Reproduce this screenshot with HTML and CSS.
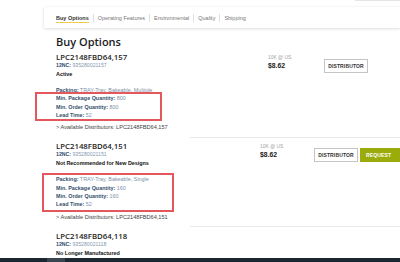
FILE: index.html
```html
<!DOCTYPE html>
<html lang="en">
<head>
  <meta charset="UTF-8" />
  <title>Buy Options</title>
  <link rel="stylesheet" href="styles.css">
</head>
<body>
  <div class="topline"></div>
  <nav class="tabs">
    <a class="tab active"><span>Buy Options</span></a>
    <a class="tab">Operating Features</a>
    <a class="tab">Environmental</a>
    <a class="tab">Quality</a>
    <a class="tab">Shipping</a>
  </nav>

  <main class="content">
    <h1>Buy Options</h1>

    <div class="item">
      <div class="info">
        <div class="part">LPC2148FBD64,157</div>
        <div class="nc"><b>12NC:</b> 935280021157</div>
        <div class="status">Active</div>
        <div class="specs">
          <div><b>Packing:</b> TRAY-Tray, Bakeable, Multiple</div>
          <div><b>Min. Package Quantity:</b> 800</div>
          <div><b>Min. Order Quantity:</b> 800</div>
          <div><b>Lead Time:</b> 52</div>
        </div>
        <div class="dist">&gt; Available Distributors: LPC2148FBD64,157</div>
        <div class="mark mark-one"></div>
      </div>
      <div class="price">
        <div class="qty">10K @ US</div>
        <div class="amount">$8.62</div>
      </div>
      <div class="actions">
        <button class="btn">DISTRIBUTOR</button>
      </div>
    </div>

    <div class="item">
      <div class="info">
        <div class="part">LPC2148FBD64,151</div>
        <div class="nc"><b>12NC:</b> 935280021151</div>
        <div class="status">Not Recommended for New Designs</div>
        <div class="specs">
          <div><b>Packing:</b> TRAY-Tray, Bakeable, Single</div>
          <div><b>Min. Package Quantity:</b> 160</div>
          <div><b>Min. Order Quantity:</b> 160</div>
          <div><b>Lead Time:</b> 52</div>
        </div>
        <div class="dist">&gt; Available Distributors: LPC2148FBD64,151</div>
        <div class="mark mark-two"></div>
      </div>
      <div class="price">
        <div class="qty">10K @ US</div>
        <div class="amount">$8.62</div>
      </div>
      <div class="actions">
        <button class="btn">DISTRIBUTOR</button>
        <button class="btn btn-request">REQUEST</button>
      </div>
    </div>

    <div class="item">
      <div class="info">
        <div class="part">LPC2148FBD64,118</div>
        <div class="nc"><b>12NC:</b> 935280021118</div>
        <div class="status">No Longer Manufactured</div>
      </div>
    </div>
  </main>

  <div class="taskbar"><span class="task"></span></div>
</body>
</html>
```

FILE: styles.css
```css
* {
  box-sizing: border-box;
}

body {
  margin: 0;
  width: 400px;
  height: 262px;
  overflow: hidden;
  background: #fff;
  font-family: "Liberation Sans", Arial, sans-serif;
  color: #222;
}

.topline {
  height: 1px;
  margin-left: 355px;
  background: #e4e4e4;
}

/* tab strip */
.tabs {
  margin: 6px 0 0 44px;
  height: 21px;
  display: flex;
  align-items: center;
  padding-left: 8px;
  background: #fff;
  box-shadow: 0 1px 3px rgba(0,0,0,0.12), 0 0 1px rgba(0,0,0,0.1);
}

.tab {
  font-size: 5.5px;
  line-height: 8px;
  color: #777;
  padding: 0 4px;
  border-left: 1px solid #e0e0e0;
}

.tab:first-child {
  border-left: none;
}

.tab.active {
  color: #333;
  font-weight: bold;
}

.tab.active span {
  border-bottom: 1px solid #f2c94c;
  padding-bottom: 1px;
}

/* content */
.content {
  padding-left: 56px;
}

h1 {
  margin: 7px 0 0;
  font-family: "Open Sans", sans-serif;
  font-weight: 600;
  font-size: 11px;
  line-height: 13.5px;
  color: #1b1b1b;
}

.item {
  display: flex;
  align-items: flex-start;
  padding: 4.5px 0 6.8px;
  background: linear-gradient(#e8e8e8, #e8e8e8) 134px 100% / calc(100% - 134px) 1px no-repeat;
}

.item:last-child {
  background: none;
}

.info {
  position: relative;
  width: 212px;
}

.part {
  font-family: "Open Sans", sans-serif;
  font-weight: 600;
  font-size: 7.8px;
  line-height: 9px;
  color: #1d1d1d;
}

.nc {
  font-size: 5.2px;
  line-height: 6px;
  color: #8498b0;
}

.nc b {
  color: #2c4a6e;
}

.status {
  margin-top: 1px;
  font-size: 5.4px;
  line-height: 10px;
  font-weight: bold;
  color: #111;
}

.specs {
  margin-top: 7px;
  font-size: 5.4px;
  line-height: 8.3px;
  color: #7d90a8;
}

.specs b {
  color: #34506f;
}

.dist {
  margin-top: 4px;
  font-size: 5.6px;
  line-height: 8px;
  color: #444;
}

/* red annotation boxes drawn over the specs */
.mark {
  position: absolute;
  border: 2px solid #e4575c;
}

.mark-one {
  left: -21px;
  top: 39px;
  width: 127px;
  height: 29px;
}

.mark-two {
  left: -14px;
  top: 30.5px;
  width: 132px;
  height: 39px;
}

.price {
  width: 56px;
}

.qty {
  font-size: 4.9px;
  line-height: 9px;
  color: #a2a2a2;
}

.amount {
  font-size: 6.8px;
  line-height: 8px;
  font-weight: bold;
  color: #222;
}

.actions {
  display: flex;
  gap: 2px;
  margin-top: 6px;
}

.btn {
  width: 44px;
  height: 14px;
  padding: 0;
  border: 1px solid #c4c4c4;
  background: #fff;
  font-family: "Liberation Sans", Arial, sans-serif;
  font-size: 5px;
  font-weight: bold;
  letter-spacing: 0.15px;
  color: #333;
}

.btn-request {
  width: 40px;
  text-align: left;
  padding-left: 5px;
  background: #9cab0c;
  border-color: #9cab0c;
  color: #fff;
}

.taskbar {
  position: fixed;
  left: 0;
  right: 0;
  bottom: 0;
  height: 4px;
  display: flex;
  padding-left: 47px;
  background: #1c2831;
}

.task {
  width: 18px;
  background: #3a464f;
}
```
